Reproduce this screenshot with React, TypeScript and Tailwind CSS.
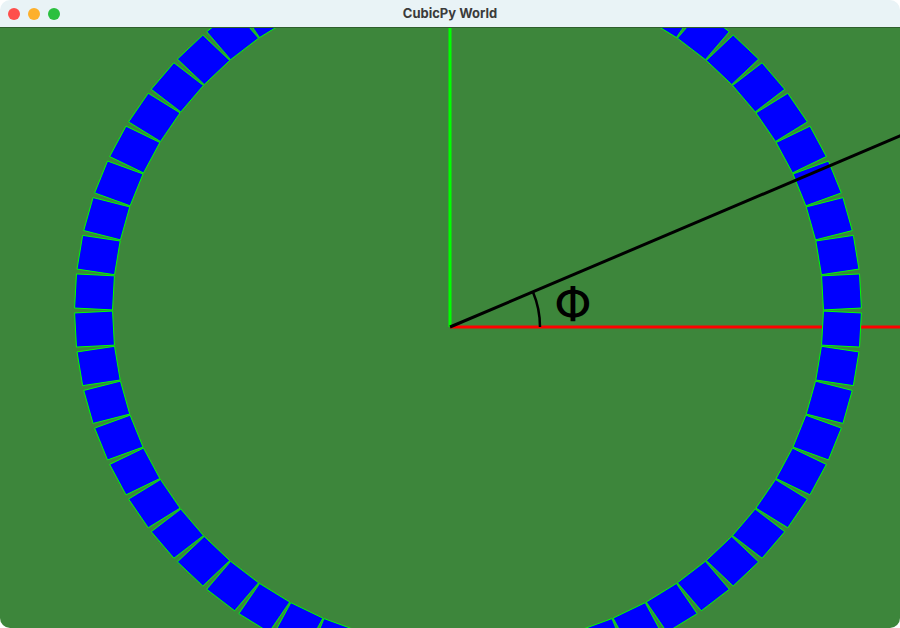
const RING_CX = 468;
const RING_CY = 282.5;
const RING_R = 374;
const RING_SQUASH = 0.948;
const COUNT = 60;

const squares = Array.from({ length: COUNT }, (_, i) => 3 + (360 / COUNT) * i);

function TrafficLights() {
  return (
    <div className="flex items-center gap-2 pl-2">
      <span className="h-3 w-3 rounded-full bg-[#fe4f4c]" />
      <span className="h-3 w-3 rounded-full bg-[#fdb02c]" />
      <span className="h-3 w-3 rounded-full bg-[#2bc03f]" />
    </div>
  );
}

function World() {
  const phi = (23 * Math.PI) / 180;
  const arcR = 90;
  const ax = 450 + arcR * Math.cos(phi);
  const ay = 299 - arcR * Math.sin(phi);
  const lx = 450 + 520 * Math.cos(phi);
  const ly = 299 - 520 * Math.sin(phi);

  return (
    <svg viewBox="0 0 900 600" width="900" height="600" className="block">
      <rect width="900" height="600" fill="#3d863b" />
      <line x1="450" y1="299" x2="900" y2="299" stroke="#ff0000" strokeWidth="3" />
      {/* ring of cubes, seen slightly tilted so it reads as a flat ellipse */}
      <g transform={`translate(${RING_CX} ${RING_CY}) scale(1 ${RING_SQUASH}) translate(${-RING_CX} ${-RING_CY})`}>
        {squares.map((deg) => {
          const rad = (deg * Math.PI) / 180;
          const cx = RING_CX + RING_R * Math.cos(rad);
          const cy = RING_CY - RING_R * Math.sin(rad);
          return (
            <g key={deg} transform={`translate(${cx} ${cy}) rotate(${-deg})`}>
              <rect
                x="-19"
                y="-18"
                width="38"
                height="36"
                fill="#0000ff"
                stroke="#00ff00"
                strokeWidth="1"
                vectorEffect="non-scaling-stroke"
              />
            </g>
          );
        })}
      </g>
      <line x1="450" y1="0" x2="450" y2="299" stroke="#00ff00" strokeWidth="3" />
      <line x1="450" y1="299" x2={lx} y2={ly} stroke="#000000" strokeWidth="3" />
      <path
        d={`M ${450 + arcR} 299 A ${arcR} ${arcR} 0 0 0 ${ax} ${ay}`}
        fill="none"
        stroke="#000000"
        strokeWidth="2.5"
      />
      <text
        x="573"
        y="293"
        textAnchor="middle"
        fontSize="48"
        fill="#000000"
        style={{ fontFamily: '"DejaVu Sans", sans-serif' }}
      >
        Φ
      </text>
    </svg>
  );
}

export default function App() {
  return (
    <div className="h-[628px] w-[900px] bg-white">
      <div className="flex h-full w-full flex-col overflow-hidden rounded-[10px]">
        <header className="relative flex h-[28px] shrink-0 items-center border-b border-[#2f5f2d] bg-[#e9f3f6]">
          <TrafficLights />
          <h1 className="pointer-events-none absolute inset-x-0 text-center font-['Inter',sans-serif] text-[13px] font-bold text-[#3b3b3b]">
            CubicPy World
          </h1>
        </header>
        <main className="flex-1 overflow-hidden">
          <World />
        </main>
      </div>
    </div>
  );
}
